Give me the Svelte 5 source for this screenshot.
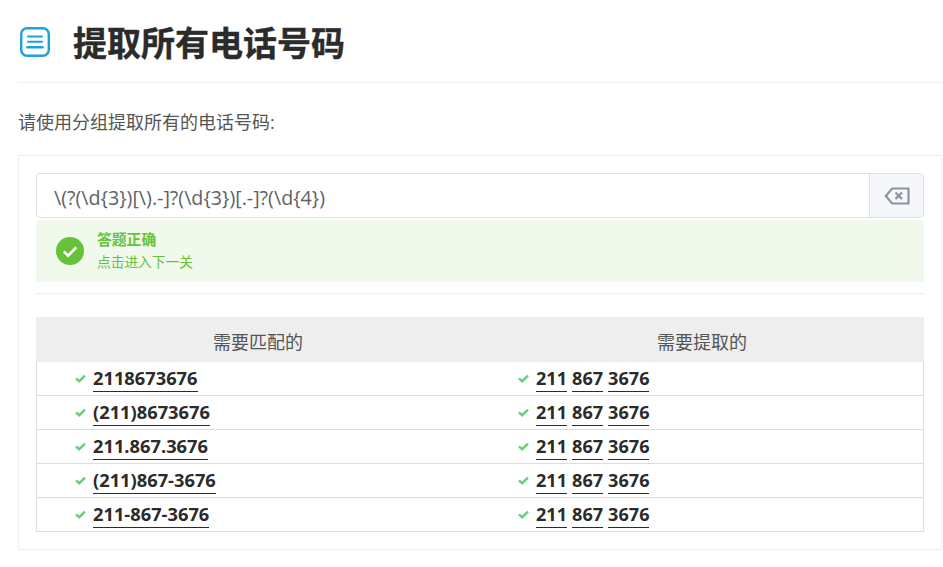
<script>
  const rows = ['2118673676', '(211)8673676', '211.867.3676', '(211)867-3676', '211-867-3676'];
  const groups = ['211', '867', '3676'];
</script>

<main class="page">
  <header class="head">
    <svg class="logo" viewBox="0 0 30 30" aria-hidden="true">
      <rect x="1.200" y="1.200" width="27.600" height="27.600" rx="6" fill="none" stroke="#1ba1e2" stroke-width="2.400" />
      <path d="M8 9.500h14M8 14.800h14" stroke="#1ba1e2" stroke-width="2" stroke-linecap="round" fill="none" />
      <path d="M7.500 20.200h15" stroke="#1ba1e2" stroke-width="2.600" stroke-linecap="round" fill="none" />
    </svg>
    <h1>提取所有电话号码</h1>
  </header>

  <p class="lead">请使用分组提取所有的电话号码:</p>

  <section class="card">
    <div class="input">
      <div class="value">\(?(\d{'{'}3{'}'})[\).-]?(\d{'{'}3{'}'})[.-]?(\d{'{'}4{'}'})</div>
      <div class="clear">
        <svg viewBox="0 0 26 18" width="26" height="18" aria-hidden="true">
          <path d="M24.500 1.500H8.200L1.800 9l6.400 7.500h16.300z" fill="none" stroke="#8f949c" stroke-width="2.200" />
          <path d="M11.500 5.500l6.500 6.500M18 5.500L11.500 12" fill="none" stroke="#8f949c" stroke-width="2.400" />
        </svg>
      </div>
    </div>

    <div class="alert">
      <span class="ok">
        <svg viewBox="0 0 28 28" width="28" height="28" aria-hidden="true">
          <circle cx="14" cy="14" r="14" fill="#67c23a" />
          <path d="M7.800 14.500l4.300 4.200 8.200-8.400" fill="none" stroke="#fff" stroke-width="2.600" />
        </svg>
      </span>
      <div class="msg">
        <strong>答题正确</strong>
        <span>点击进入下一关</span>
      </div>
    </div>

    <hr />

    <div class="table">
      <div class="thead">
        <div>需要匹配的</div>
        <div>需要提取的</div>
      </div>
      {#each rows as row}
        <div class="row">
          <div class="cell">
            <svg class="tick" viewBox="0 0 12 10" aria-hidden="true"><path d="M1 4.800l3.500 3.200L11 1.800" fill="none" stroke="#67d07a" stroke-width="2.800" /></svg>
            <span class="m">{row}</span>
          </div>
          <div class="cell">
            <svg class="tick" viewBox="0 0 12 10" aria-hidden="true"><path d="M1 4.800l3.500 3.200L11 1.800" fill="none" stroke="#67d07a" stroke-width="2.800" /></svg>
            {#each groups as g}<span class="m g">{g}</span>{/each}
          </div>
        </div>
      {/each}
    </div>
  </section>
</main>

<style>
  :global(body) {
    margin: 0;
    background: #fff;
  }
  .page {
    box-sizing: border-box;
    width: 943px;
    height: 567px;
    padding-left: 18px;
    overflow: hidden;
    color: #555;
    font-family: "Open Sans", "Noto Sans CJK SC", sans-serif;
  }
  .head {
    display: flex;
    align-items: center;
    height: 82px;
    border-bottom: 1px solid #eee;
    padding-left: 2px;
  }
  .logo {
    width: 30px;
    height: 30px;
    margin-right: 23px;
    margin-top: 1px;
  }
  h1 {
    margin: 4px 0 0;
    font-size: 34px;
    font-weight: 700;
    color: #2b2b2b;
    line-height: 1;
    -webkit-text-stroke: 0.4px #2b2b2b;
  }
  .lead {
    margin: 0;
    padding-top: 28px;
    height: 44px;
    font-size: 18px;
    line-height: 23px;
    color: #555;
    font-weight: 400;
  }
  .card {
    box-sizing: border-box;
    width: 924px;
    height: 395px;
    border: 1px solid #eee;
    padding: 17px;
  }
  .input {
    display: flex;
    height: 45px;
    box-sizing: border-box;
    border: 1px solid #dcdfe6;
    border-radius: 4px;
  }
  .value {
    flex: 1;
    padding-left: 17px;
    font-size: 19.700px;
    line-height: 47px;
    color: #606266;
    white-space: nowrap;
  }
  .clear {
    width: 53px;
    border-left: 1px solid #dcdfe6;
    background: #f5f7fa;
    border-radius: 0 3px 3px 0;
    display: flex;
    align-items: center;
    justify-content: center;
  }
  .alert {
    display: flex;
    align-items: center;
    height: 62px;
    margin-top: 2px;
    background: #f0f9eb;
    border-radius: 4px;
    color: #67c23a;
    padding-left: 20px;
  }
  .ok {
    display: flex;
    margin-right: 13px;
  }
  .msg {
    display: flex;
    flex-direction: column;
    gap: 5px;
    margin-top: -2px;
  }
  .msg strong {
    font-size: 14.800px;
    line-height: 18px;
    font-weight: 700;
  }
  .msg span {
    font-size: 13.700px;
    line-height: 18px;
  }
  hr {
    border: 0;
    border-top: 1px solid #eee;
    margin: 11px 0 23px;
  }
  .table {
    border: 1px solid #ddd;
    border-top: 0;
  }
  .thead {
    display: grid;
    grid-template-columns: 1fr 1fr;
    height: 45px;
    margin: 0 -1px;
    background: #eee;
    text-align: center;
    font-size: 18px;
    line-height: 50px;
    color: #555;
  }
  .row {
    display: grid;
    grid-template-columns: 1fr 1fr;
    box-sizing: border-box;
    height: 34px;
    border-top: 1px solid #ddd;
  }
  .thead + .row {
    height: 33px;
    border-top: 0;
  }
  .cell {
    display: flex;
    align-items: flex-start;
    padding-left: 38px;
    height: 100%;
    box-sizing: border-box;
  }
  .tick {
    width: 11px;
    height: 9px;
    margin: 12px 7px 0 0;
    flex: none;
  }
  .m {
    font-size: 18.300px;
    font-weight: 700;
    line-height: 24px;
    color: #2b2b2b;
    margin-top: 4px;
    padding-bottom: 1px;
    border-bottom: 1px solid #2b2b2b;
    height: 24px;
    white-space: nowrap;
  }
  .g {
    margin-right: 5px;
    font-size: 18.100px;
  }
</style>
